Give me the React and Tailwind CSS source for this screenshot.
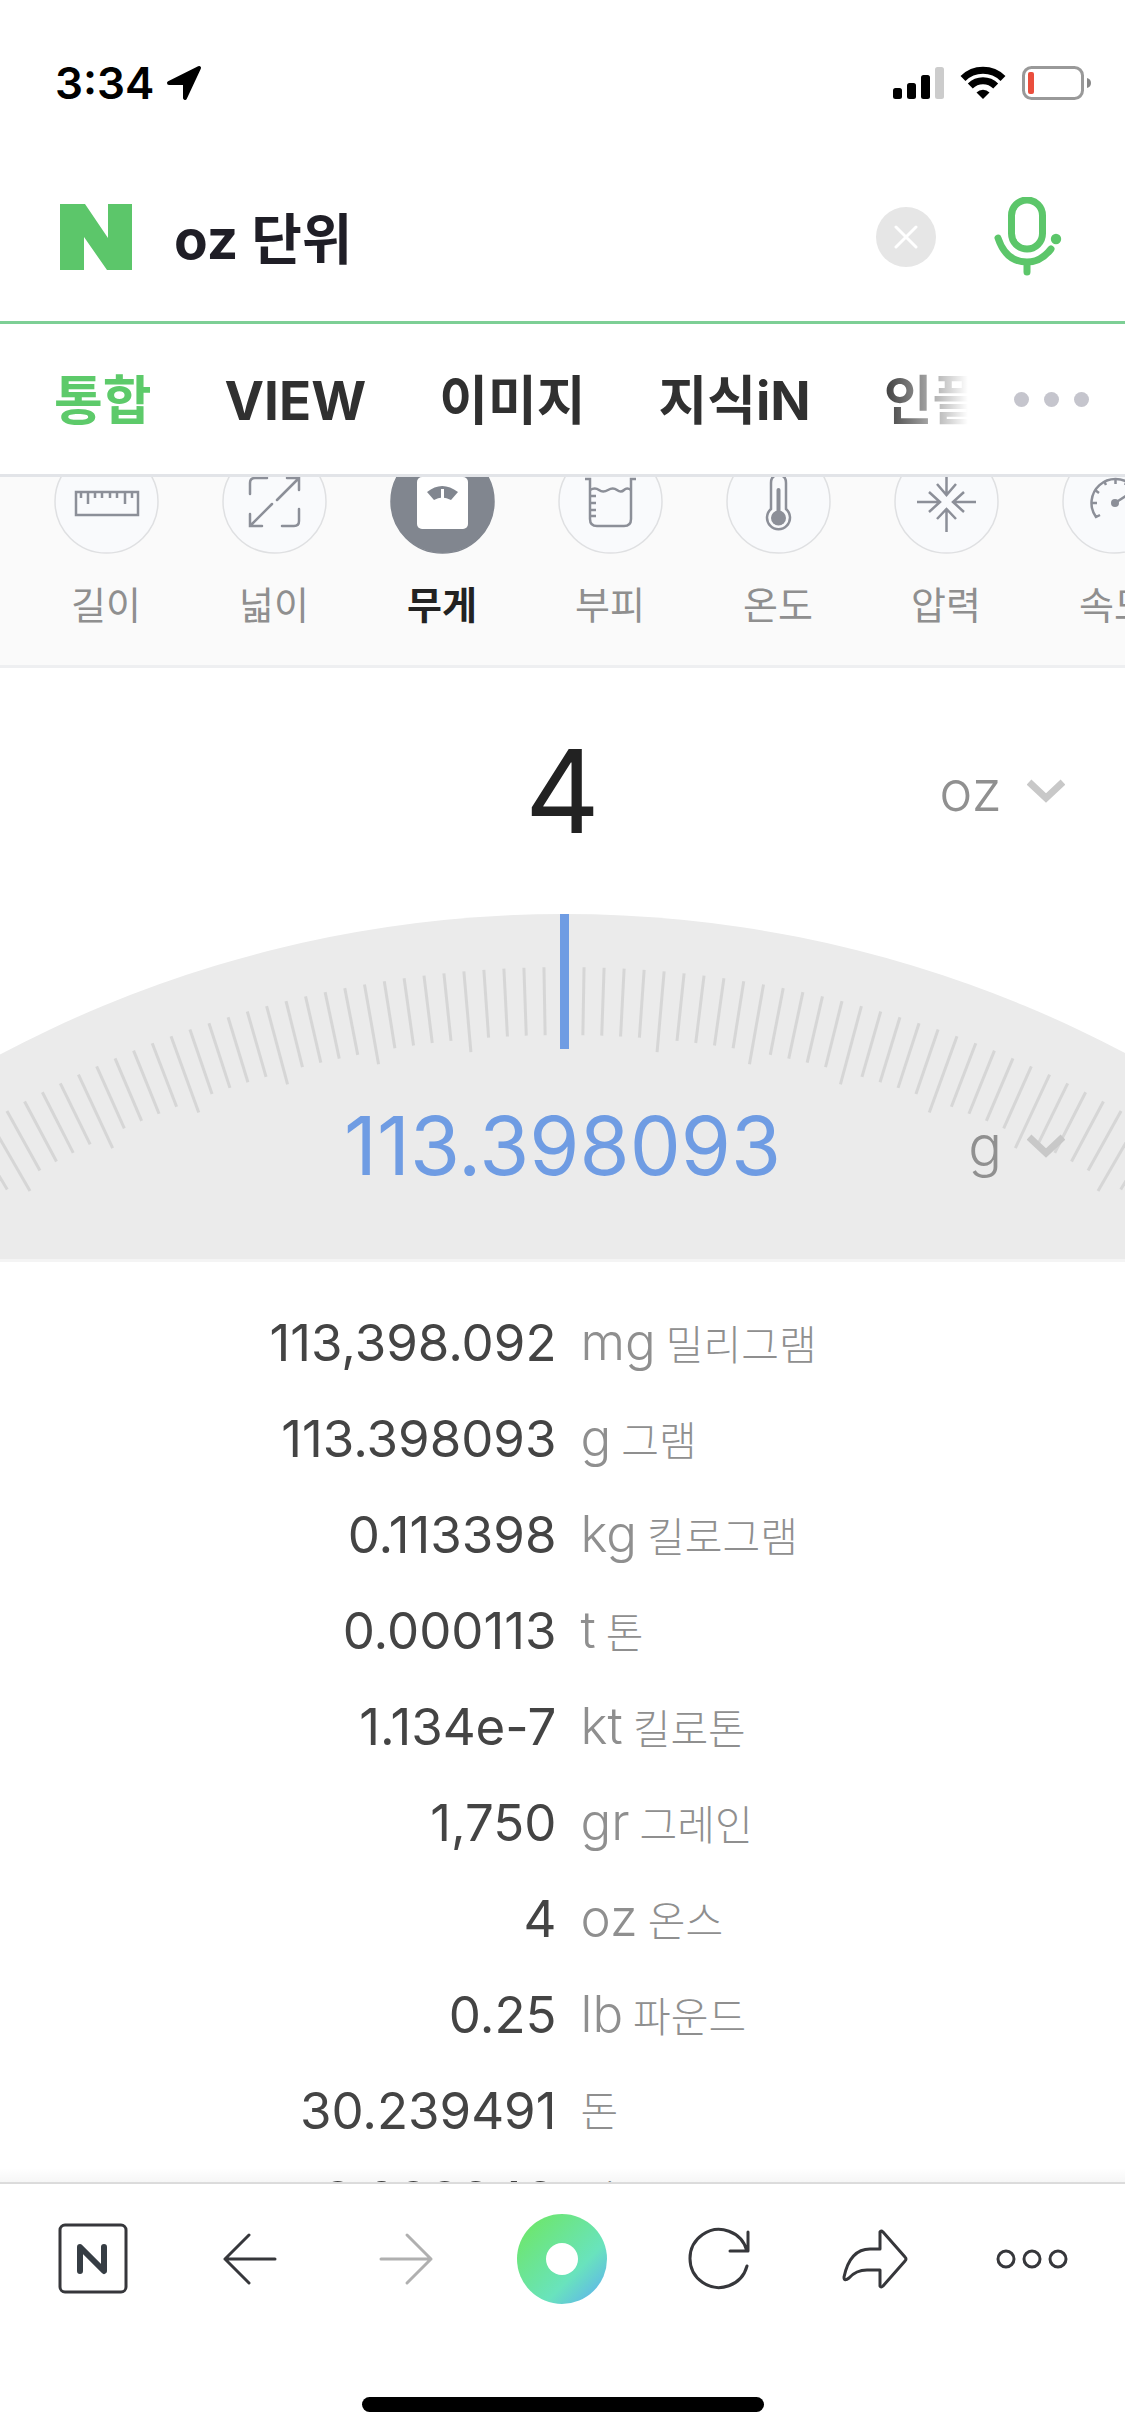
import { useState } from 'react'

const TABS = ['통합', 'VIEW', '이미지', '지식iN', '인플루언서']

const CATEGORIES = [
  { name: '길이', icon: RulerIcon },
  { name: '넓이', icon: AreaIcon },
  { name: '무게', icon: ScaleIcon, active: true },
  { name: '부피', icon: BeakerIcon },
  { name: '온도', icon: ThermometerIcon },
  { name: '압력', icon: PressureIcon },
  { name: '속도', icon: SpeedIcon },
]

const CONVERSIONS = [
  { value: '113,398.092', symbol: 'mg', name: '밀리그램' },
  { value: '113.398093', symbol: 'g', name: '그램' },
  { value: '0.113398', symbol: 'kg', name: '킬로그램' },
  { value: '0.000113', symbol: 't', name: '톤' },
  { value: '1.134e-7', symbol: 'kt', name: '킬로톤' },
  { value: '1,750', symbol: 'gr', name: '그레인' },
  { value: '4', symbol: 'oz', name: '온스' },
  { value: '0.25', symbol: 'lb', name: '파운드' },
  { value: '30.239491', symbol: '', name: '돈' },
  { value: '3.023949', symbol: '', name: '냥' },
]

const UNITS = ['mg', 'g', 'kg', 't', 'kt', 'gr', 'oz', 'lb']

// dial geometry, in svg units
const DIAL = { cx: 564, cy: 1202, outer: 1149, short: 1081, long: 1068 }
const TICKS = Array.from({ length: 67 }, (_, i) => i - 33).filter((deg) => deg !== 0)

function RulerIcon() {
  return (
    <>
      <rect x="22" y="43" width="62" height="23" />
      <path d="M27 43v6M34 43v12M41 43v6M48 43v6M56 43v6M63 43v6M71 43v12M78 43v6" />
    </>
  )
}

function AreaIcon() {
  return (
    <>
      <path d="M28 45V34q0-5 5-5h12M60 77h12q5 0 5-5V60" strokeLinecap="round" />
      <path d="M55 51 77 29M65 29h12v12M50 55 28 77M28 65v12h12" strokeLinecap="round" />
    </>
  )
}

function ScaleIcon() {
  return (
    <>
      <rect x="27" y="28" width="51" height="52" rx="5" fill="#fff" stroke="none" />
      <path d="M37 43Q52 31 68 43L61 51Q52 46 44 51Z" fill="#81868f" stroke="none" />
      <path d="M52.500 40v9" stroke="#fff" strokeWidth="3" />
    </>
  )
}

function BeakerIcon() {
  return (
    <>
      <path d="M27 30h5v40q0 7 7 7h27q7 0 7-7V30h5" />
      <path d="M32 41q5-3 9 0t9 0 9 0 7 0 7 0M32 47h6M32 54h6M32 61h6M32 67h6" />
    </>
  )
}

function ThermometerIcon() {
  return (
    <>
      <path d="M45 60V34q0-8 7.500-8t7.500 8v26a11.500 11.500 0 1 1-15 0Z" />
      <circle cx="52.500" cy="69" r="7.500" fill="#8c8f98" stroke="none" />
      <path d="M52.500 41v27" strokeWidth="4" strokeLinecap="round" />
    </>
  )
}

function PressureIcon() {
  return (
    <>
      <path d="M23 53h23M35 43l11 10-11 10M82 53H59M70 43 59 53l11 10" />
      <path d="M52.500 23v23M43 35l9.500 11L62 35M52.500 83V60M43 70l9.500-10L62 70" />
    </>
  )
}

function SpeedIcon() {
  return (
    <>
      <path d="M38 66l-4 2A24 24 0 1 1 73 68l-4-2" />
      <path d="M30 54h5M33 41l4 3M42 32l2 4M53.500 29v6M65 32l-2 4M53 54l14-9" />
      <circle cx="53" cy="54" r="4" fill="#8c8f98" stroke="none" />
    </>
  )
}

function StatusBar() {
  return (
    <div className="flex h-[153px] shrink-0 items-center justify-between pt-3 pr-[34px] pl-[55px] text-black">
      <div className="flex items-center gap-3">
        <span className="text-[44px] leading-none font-semibold">3:34</span>
        <svg viewBox="0 0 36 36" className="h-9 w-9">
          <path d="M33 3 19 33V18H3Z" fill="currentColor" stroke="currentColor" strokeWidth="4" strokeLinejoin="round" />
        </svg>
      </div>
      <div className="flex items-center gap-4">
        <svg viewBox="0 0 51 34" className="h-[34px] w-[51px]" fill="currentColor">
          <rect x="0" y="22" width="9" height="11" rx="2.500" />
          <rect x="14" y="17" width="9" height="16" rx="2.500" />
          <rect x="28" y="9" width="9" height="24" rx="2.500" />
          <rect x="42" y="1" width="9" height="32" rx="2.500" fill="#ccc" />
        </svg>
        <svg viewBox="0 0 46 34" className="h-[34px] w-[46px]" fill="none" stroke="currentColor" strokeWidth="7">
          <path d="M3 12.500A28.500 28.500 0 0 1 43 12.500" />
          <path d="M10.300 20A18 18 0 0 1 35.700 20" />
          <path d="M16.500 26.500a9.300 9.300 0 0 1 13 0L23 33Z" fill="currentColor" stroke="none" />
        </svg>
        <svg viewBox="0 0 69 34" className="h-[34px] w-[69px]">
          <rect x="1.500" y="1.500" width="59" height="31" rx="8" fill="none" stroke="#999" strokeWidth="3" />
          <rect x="6" y="6" width="6" height="22" rx="2" fill="#ea4e3d" />
          <path d="M65 12q4 1 4 5t-4 5Z" fill="#888" />
        </svg>
      </div>
    </div>
  )
}

function SearchHeader() {
  const [query, setQuery] = useState('oz 단위')

  return (
    <header className="flex h-[171px] shrink-0 items-center border-b-3 border-[#7dcf95] pr-[63px] pl-[60px]">
      <a href="#" aria-label="NAVER">
        <svg viewBox="0 0 72 66" className="h-[66px] w-[72px]" fill="#5cc66a">
          <path d="M0 0h25l23 34V0h24v66H47L24 33v33H0Z" />
        </svg>
      </a>
      <input
        type="text"
        aria-label="검색어"
        value={query}
        onChange={(e) => setQuery(e.target.value)}
        className="ml-[42px] min-w-0 flex-1 pt-1 text-[55px] leading-[72px] font-bold text-[#1f1e26] outline-none"
      />
      <button
        type="button"
        aria-label="지우기"
        onClick={() => setQuery('')}
        className="flex h-[60px] w-[60px] shrink-0 items-center justify-center rounded-full bg-[#e6e6e6]"
      >
        <svg viewBox="0 0 24 24" className="h-6 w-6" stroke="#fff" strokeWidth="3" strokeLinecap="round">
          <path d="m2 2 20 20M22 2 2 22" />
        </svg>
      </button>
      <button type="button" aria-label="음성 검색" className="ml-[58px] shrink-0">
        <svg viewBox="0 0 68 80" className="h-20 w-[68px]" fill="none" stroke="#5cc66a" strokeWidth="7" strokeLinecap="round">
          <rect x="17.500" y="3" width="31" height="49" rx="15.500" />
          <path d="M4 41Q12 65 33 65 47 65 57 52M33 65v10" />
          <circle cx="62" cy="42" r="5.200" fill="#5cc66a" stroke="none" />
        </svg>
      </button>
    </header>
  )
}

function TabBar() {
  return (
    <div className="flex h-[153px] shrink-0 items-center border-b-3 border-[#e2e4e8]">
      <nav className="relative flex min-w-0 flex-1 gap-[73px] overflow-hidden pt-1 pl-[54px]">
        {TABS.map((tab, i) => (
          <a
            key={tab}
            href="#"
            className={`shrink-0 text-[53px] leading-[72px] font-bold whitespace-nowrap ${i === 0 ? 'text-[#5dca6a]' : 'text-[#303030]'}`}
          >
            {tab}
          </a>
        ))}
        <span className="pointer-events-none absolute inset-y-0 right-0 w-[90px] bg-gradient-to-r from-white/0 to-white" />
      </nav>
      <button type="button" aria-label="더보기" className="flex h-full w-[157px] items-center gap-[15px] pl-[46px]">
        <span className="h-[15px] w-[15px] rounded-full bg-[#c5c5cd]" />
        <span className="h-[15px] w-[15px] rounded-full bg-[#c5c5cd]" />
        <span className="h-[15px] w-[15px] rounded-full bg-[#c5c5cd]" />
      </button>
    </div>
  )
}

function Categories() {
  return (
    <div className="flex h-[191px] shrink-0 items-end overflow-hidden border-b-3 border-[#eeeff1] bg-[#fafafa] pb-[34px] pl-[22px]">
      {CATEGORIES.map(({ name, icon: Icon, active }) => (
        <button key={name} type="button" className="flex w-[168px] shrink-0 flex-col items-center gap-[25px]">
          <svg viewBox="0 0 105 105" className="h-[105px] w-[105px]" fill="none" stroke="#8c8f98" strokeWidth="2.500">
            <circle
              cx="52.500"
              cy="52.500"
              r="51.500"
              fill={active ? '#81868f' : '#f9fafc'}
              stroke={active ? '#81868f' : '#dfe0e2'}
              strokeWidth="1.500"
            />
            <Icon />
          </svg>
          <span className={`text-[38px] leading-[52px] ${active ? 'font-bold text-[#222]' : 'text-[#8f8f8f]'}`}>
            {name}
          </span>
        </button>
      ))}
    </div>
  )
}

function UnitSelect({ label, value, onChange }) {
  return (
    <label className="relative flex items-center justify-self-end">
      <span className="sr-only">{label}</span>
      <select
        value={value}
        onChange={(e) => onChange(e.target.value)}
        className="w-[200px] appearance-none bg-transparent pr-[63px] text-[56px] leading-[72px] font-light text-[#909090] outline-none [text-align-last:right]"
      >
        {UNITS.map((unit) => (
          <option key={unit}>{unit}</option>
        ))}
      </select>
      <svg viewBox="0 0 38 25" className="pointer-events-none absolute right-0 h-[25px] w-[38px]" fill="none" stroke="#c8c8c8" strokeWidth="7">
        <path d="m2 3 17 16L36 3" />
      </svg>
    </label>
  )
}

function Dial() {
  return (
    <svg viewBox="0 0 1125 345" preserveAspectRatio="xMidYMin slice" className="absolute inset-0 h-full w-full">
      <circle cx={DIAL.cx} cy={DIAL.cy} r="1202" fill="#ebebeb" />
      {TICKS.map((deg) => {
        const rad = (deg * Math.PI) / 180
        const inner = deg % 5 === 0 ? DIAL.long : DIAL.short
        return (
          <line
            key={deg}
            x1={DIAL.cx + DIAL.outer * Math.sin(rad)}
            y1={DIAL.cy - DIAL.outer * Math.cos(rad)}
            x2={DIAL.cx + inner * Math.sin(rad)}
            y2={DIAL.cy - inner * Math.cos(rad)}
            stroke="#d6d6d6"
            strokeWidth="3"
          />
        )
      })}
      <rect x="560" y="0" width="9" height="135" fill="#6f9ce3" />
    </svg>
  )
}

function Converter() {
  const [amount, setAmount] = useState('4')
  const [from, setFrom] = useState('oz')
  const [to, setTo] = useState('g')

  return (
    <section>
      <div className="grid h-[246px] grid-cols-[1fr_auto_1fr] items-center px-[60px]">
        <input
          type="text"
          inputMode="decimal"
          aria-label="변환할 값"
          value={amount}
          onChange={(e) => setAmount(e.target.value)}
          className="col-start-2 w-[400px] text-center text-[116px] leading-[140px] text-[#222] outline-none"
        />
        <UnitSelect label="변환 전 단위" value={from} onChange={setFrom} />
      </div>
      <div className="relative h-[348px] border-b-3 border-[#f4f4f4]">
        <Dial />
        <div className="relative grid h-full grid-cols-[1fr_auto_1fr] items-center px-[60px] pt-[119px]">
          <output className="col-start-2 text-center text-[81px] leading-[100px] text-[#6f9ce3]">113.398093</output>
          <UnitSelect label="변환 후 단위" value={to} onChange={setTo} />
        </div>
      </div>
    </section>
  )
}

function ConversionTable() {
  return (
    <table className="mt-[33px] w-full table-fixed">
      <tbody>
        {CONVERSIONS.map((row) => (
          <tr key={row.name} className="h-24 last:h-[82px]">
            <td className="pr-[6px] text-right text-[51px] leading-[72px] text-[#444]">{row.value}</td>
            <td className="pl-[18px] text-[41px] leading-[72px] font-light text-[#8f8f8f]">
              {row.symbol && <span className="mr-[10px] text-[51px]">{row.symbol}</span>}
              {row.name}
            </td>
          </tr>
        ))}
      </tbody>
    </table>
  )
}

function BottomBar() {
  return (
    <footer className="relative h-[254px] shrink-0 border-t-2 border-[#e4e4e4] bg-white">
      <span className="pointer-events-none absolute inset-x-0 bottom-full h-4 bg-gradient-to-b from-black/0 to-black/4" />
      <div className="grid grid-cols-7 items-center justify-items-center px-[15px] pt-[30px] text-[#36373b]">
        <a href="#" aria-label="홈">
          <svg viewBox="0 0 70 90" className="h-[90px] w-[70px]" fill="none" stroke="currentColor" strokeWidth="3">
            <rect x="2" y="11" width="66" height="67" rx="5" />
            <path d="M22 57V33l24 24V33" stroke="#363d44" strokeWidth="6" strokeLinecap="round" strokeLinejoin="round" />
          </svg>
        </a>
        <button type="button" aria-label="뒤로">
          <svg viewBox="0 0 56 56" className="h-14 w-14" fill="none" stroke="currentColor" strokeWidth="3" strokeLinecap="round" strokeLinejoin="round">
            <path d="M53 28H3M27 4 3 28l24 24" />
          </svg>
        </button>
        <button type="button" aria-label="앞으로" className="text-[#b0b0b0]">
          <svg viewBox="0 0 56 56" className="h-14 w-14" fill="none" stroke="currentColor" strokeWidth="3" strokeLinecap="round" strokeLinejoin="round">
            <path d="M3 28h50M29 4l24 24-24 24" />
          </svg>
        </button>
        <button
          type="button"
          aria-label="그린닷"
          className="flex h-[90px] w-[90px] items-center justify-center rounded-full bg-[linear-gradient(135deg,#6de673_15%,#69e3bd_65%,#5fb6ea_92%)]"
        >
          <span className="h-8 w-8 rounded-full bg-white" />
        </button>
        <button type="button" aria-label="새로고침">
          <svg viewBox="0 0 64 64" className="h-16 w-16" fill="none" stroke="currentColor" strokeWidth="3" strokeLinecap="round" strokeLinejoin="round">
            <path d="M60 39A29 29 0 1 1 60 24M61 5v19H43" />
          </svg>
        </button>
        <button type="button" aria-label="공유">
          <svg viewBox="0 0 66 60" className="h-[60px] w-[66px]" fill="none" stroke="currentColor" strokeWidth="3" strokeLinecap="round" strokeLinejoin="round">
            <path d="M38 20V3q1-2 3 0l22 25q2 2 0 4L41 57q-2 2-3 0V41H25Q14 41 7 49q-5 4-5-1Q8 20 28 20Z" />
          </svg>
        </button>
        <button type="button" aria-label="메뉴">
          <svg viewBox="0 0 72 20" className="h-5 w-[72px]" fill="none" stroke="currentColor" strokeWidth="3">
            <circle cx="10" cy="10" r="8" />
            <circle cx="36" cy="10" r="8" />
            <circle cx="62" cy="10" r="8" />
          </svg>
        </button>
      </div>
      <div className="mx-auto mt-[93px] h-[15px] w-[402px] rounded-full bg-black" />
    </footer>
  )
}

export default function App() {
  return (
    <div className="flex h-screen flex-col bg-white font-['Inter','Noto_Sans_CJK_KR',sans-serif]" lang="ko">
      <StatusBar />
      <SearchHeader />
      <TabBar />
      <main className="min-h-0 flex-1 overflow-hidden">
        <Categories />
        <Converter />
        <ConversionTable />
      </main>
      <BottomBar />
    </div>
  )
}
